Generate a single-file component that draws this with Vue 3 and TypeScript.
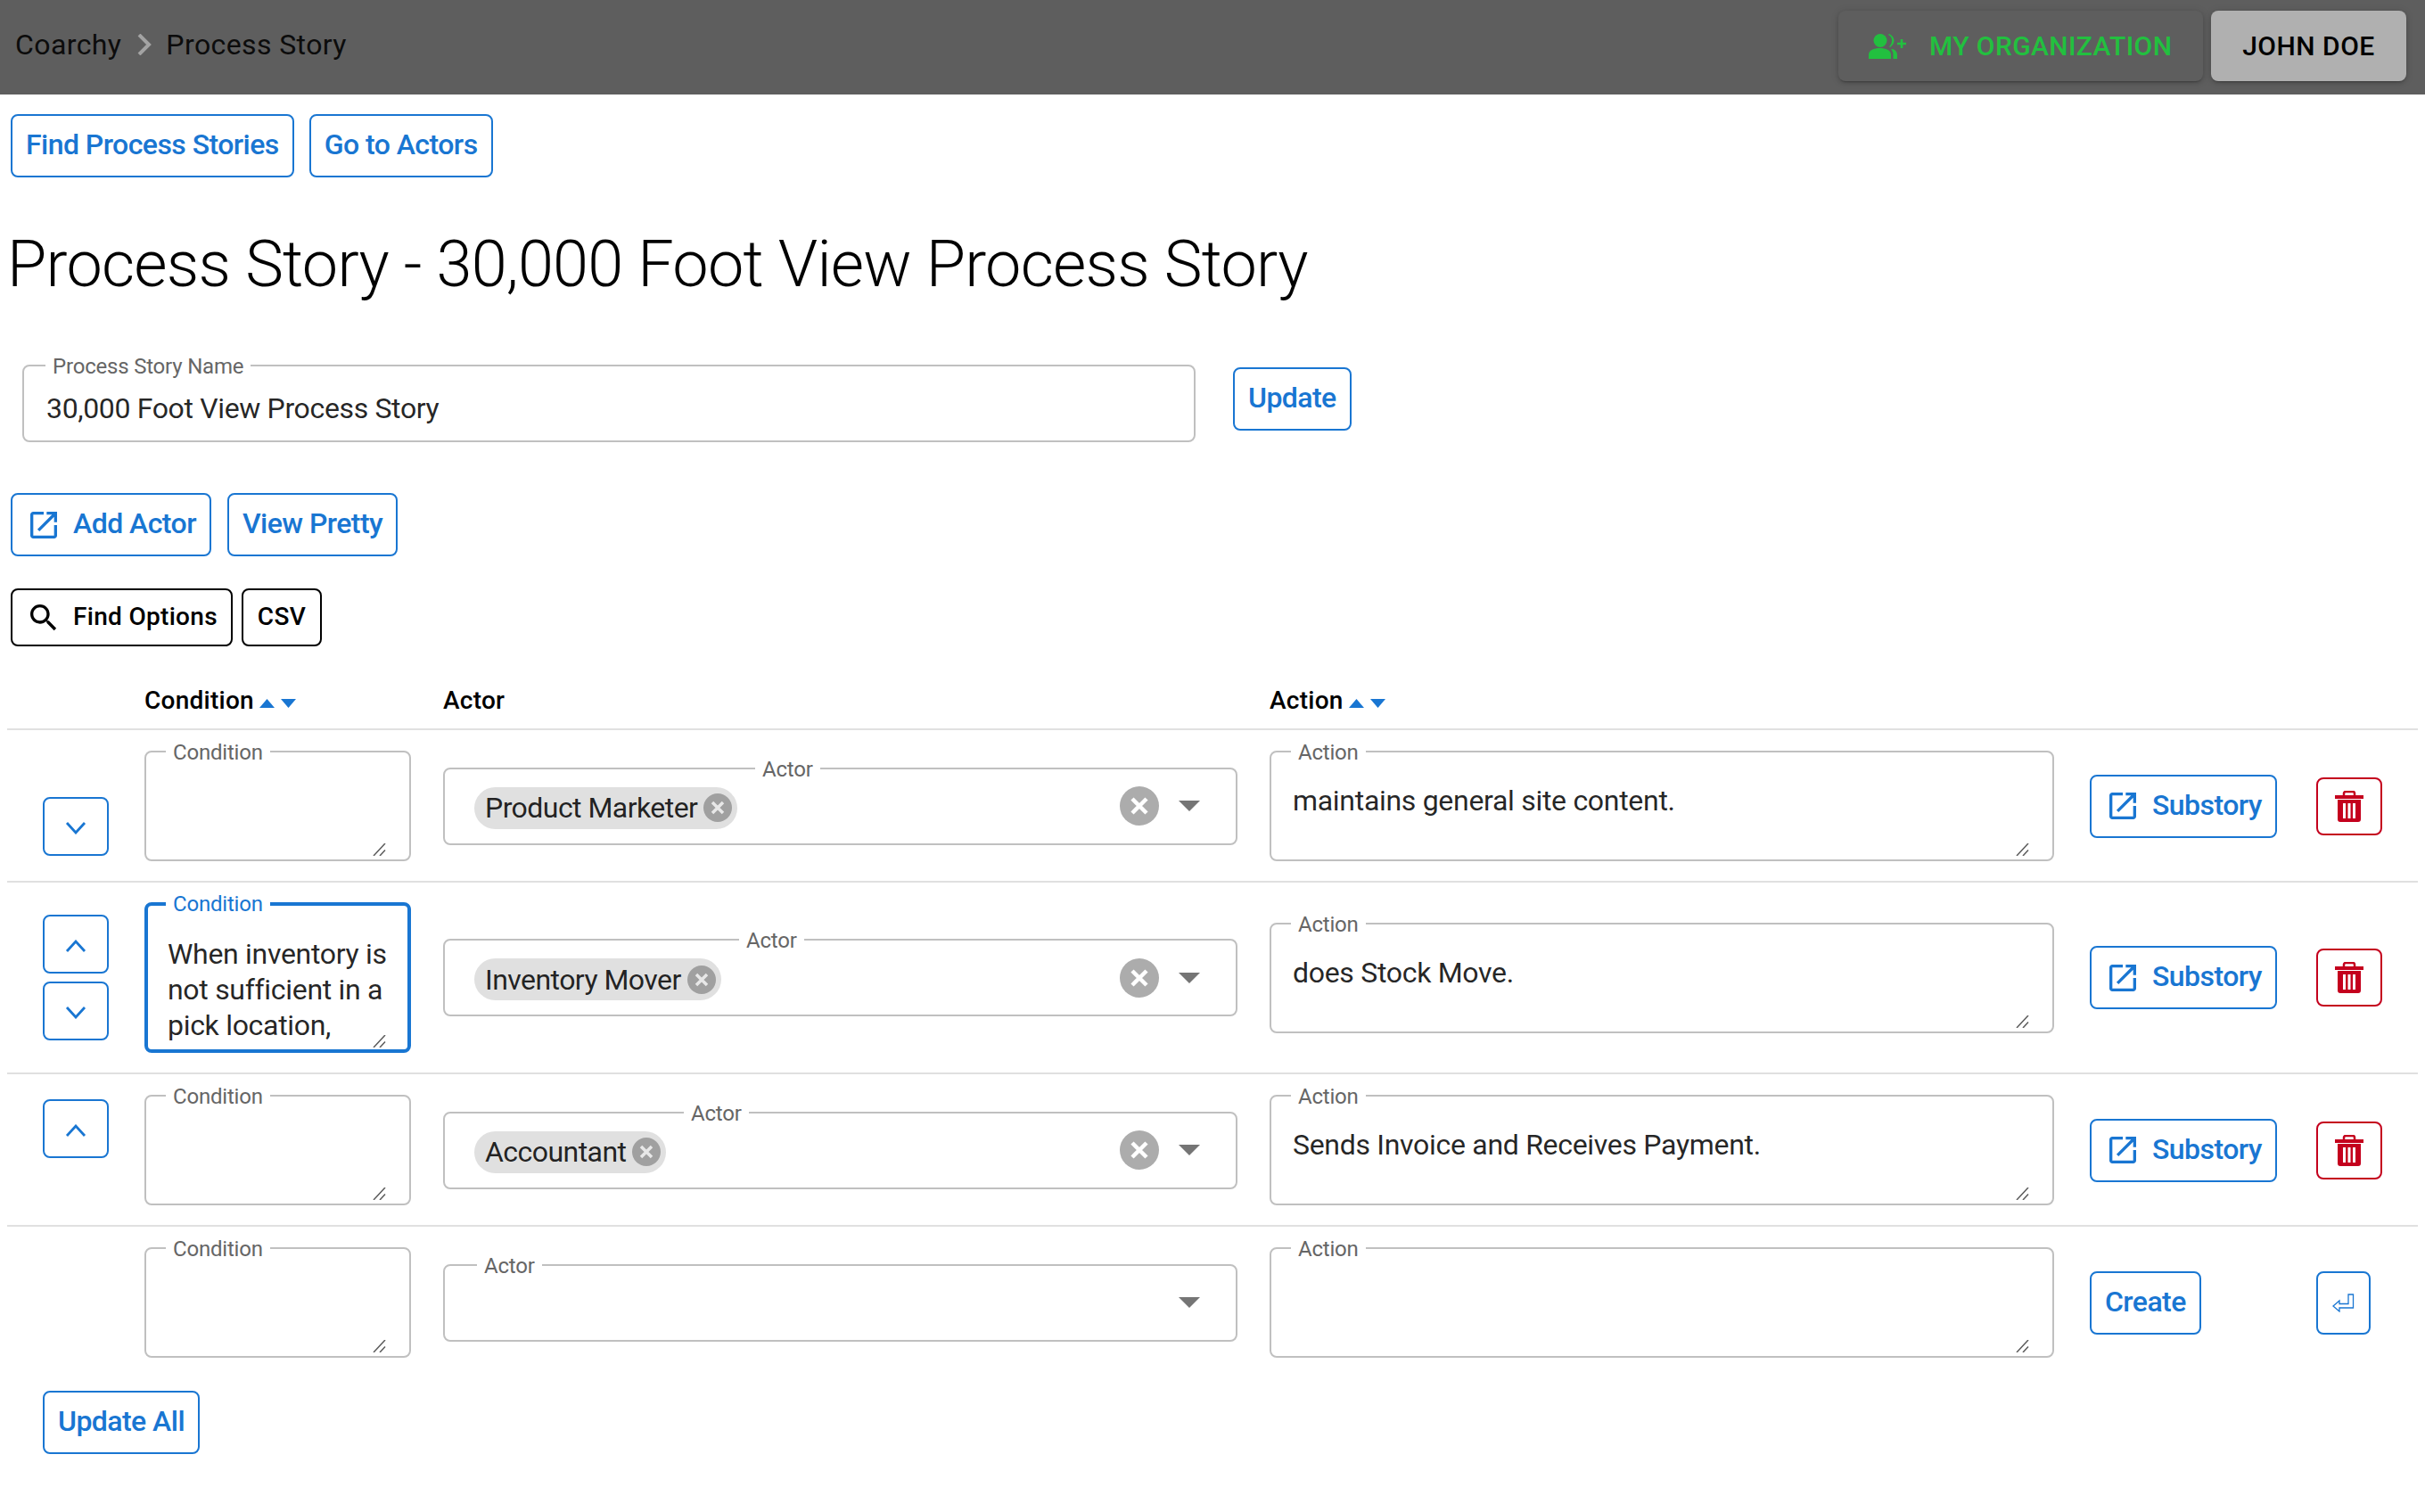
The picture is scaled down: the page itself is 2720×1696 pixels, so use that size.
<template>
  <div class="page">
    <header class="top-bar">
      <nav class="crumbs">
        <span>Coarchy</span>
        <svg class="crumb-sep" width="16" height="24" viewBox="0 0 16 24"><path d="M2 1l11 11L2 23" fill="none" stroke="#a3a3a3" stroke-width="4" /></svg>
        <span>Process Story</span>
      </nav>
      <div class="top-actions">
        <button class="top-btn org-btn">
          <svg class="org-icon" width="42" height="28" viewBox="0 0 42 28" fill="#22c03f">
            <ellipse cx="13" cy="7.5" rx="7.5" ry="7.5" />
            <path d="M0 28v-5c0-4.500 6-7 12.500-7S25 18.500 25 23v5z" />
            <path d="M23 0c4 2 5.500 5 5.500 7.500S27 13 24 15l-1-.8c2-1.700 3-4 3-6.700S25 2.500 22 1z" />
            <path d="M27 17c3 1 5 3.500 5 6.500V28h-4.500v-4.500c0-2.500-.5-4.500-2.500-6z" />
            <path d="M35.700 6h2.600v3.700H42v2.600h-3.700V16h-2.600v-3.700H32V9.700h3.700z" />
          </svg>
          MY ORGANIZATION
        </button>
        <button class="top-btn user-btn">JOHN DOE</button>
      </div>
    </header>

    <div class="btn-row nav-row">
      <button class="btn">Find Process Stories</button>
      <button class="btn">Go to Actors</button>
    </div>

    <h1 class="title">Process Story - 30,000 Foot View Process Story</h1>

    <div class="name-row">
      <div class="field name-field">
        <label class="field-label">Process Story Name</label>
        <input class="name-input" value="30,000 Foot View Process Story" />
      </div>
      <button class="btn update-btn">Update</button>
    </div>

    <div class="btn-row actor-row">
      <button class="btn icon-btn">
        <svg width="40" height="40" viewBox="0 0 24 24" fill="currentColor"><path :d="openIcon" /></svg>
        Add Actor
      </button>
      <button class="btn">View Pretty</button>
    </div>

    <div class="btn-row find-row">
      <button class="btn dark icon-btn">
        <svg width="40" height="40" viewBox="0 0 24 24" fill="currentColor"><path d="M15.5 14h-.79l-.28-.27C15.41 12.59 16 11.11 16 9.5 16 5.910 13.090 3 9.500 3S3 5.910 3 9.500 5.910 16 9.500 16c1.610 0 3.090-.59 4.230-1.570l.27.28v.79l5 4.990L20.490 19l-4.990-5zm-6 0C7.010 14 5 11.990 5 9.500S7.010 5 9.500 5 14 7.010 14 9.500 11.990 14 9.500 14z" /></svg>
        Find Options
      </button>
      <button class="btn dark">CSV</button>
    </div>

    <section class="story-table">
      <div class="grid head">
        <div></div>
        <div class="head-cell">Condition
          <svg class="sort" width="42" height="10" viewBox="0 0 42 10" fill="#1976d2"><path d="M0 10L8.500 0 17 10z" /><path d="M24 0h17l-8.500 10z" /></svg>
        </div>
        <div class="head-cell">Actor</div>
        <div class="head-cell">Action
          <svg class="sort" width="42" height="10" viewBox="0 0 42 10" fill="#1976d2"><path d="M0 10L8.500 0 17 10z" /><path d="M24 0h17l-8.500 10z" /></svg>
        </div>
      </div>

      <div v-for="row in rows" :key="row.id" class="grid row" :class="{ tall: row.focused, last: !row.saved }">
        <div class="move-cell" :class="{ 'push-down': row.saved && !row.up, 'push-up': row.saved && !row.down }">
          <button v-if="row.up" class="btn move-btn">
            <svg width="24" height="14" viewBox="0 0 24 14"><path d="M2 13L12 2l10 11" fill="none" stroke="currentColor" stroke-width="2.800" /></svg>
          </button>
          <button v-if="row.down" class="btn move-btn">
            <svg width="24" height="14" viewBox="0 0 24 14"><path d="M2 1l10 11L22 1" fill="none" stroke="currentColor" stroke-width="2.800" /></svg>
          </button>
        </div>

        <div class="field-cell">
          <div class="field area-field" :class="{ focused: row.focused }">
            <label class="field-label">Condition</label>
            <textarea class="area" :value="row.condition"></textarea>
            <svg class="grip" width="15" height="14" viewBox="0 0 15 14"><path d="M1 14L14 0M8 14l6-6.500" fill="none" stroke="#5c5c5c" stroke-width="1.500" /></svg>
          </div>
        </div>

        <div class="field-cell">
          <div class="field actor-field">
            <label class="field-label" :style="{ left: row.labelLeft + 'px' }">Actor</label>
            <span v-if="row.actor" class="chip">
              <span class="chip-text">{{ row.actor }}</span>
              <svg class="chip-del" width="32" height="32" viewBox="0 0 32 32"><circle cx="16" cy="16" r="16" fill="#a0a0a0" /><path d="M10 10l12 12m0-12L10 22" stroke="#e8e8e8" stroke-width="3.500" /></svg>
            </span>
            <div class="actor-tools">
              <svg v-if="row.actor" class="clear" width="44" height="44" viewBox="0 0 44 44"><circle cx="22" cy="22" r="22" fill="#acacac" /><path d="M14 14l16 16m0-16L14 30" stroke="#fff" stroke-width="4.500" /></svg>
              <svg class="drop" width="24" height="12" viewBox="0 0 24 12" fill="#757575"><path d="M0 0h24L12 12z" /></svg>
            </div>
          </div>
        </div>

        <div class="field-cell action-cell">
          <div class="field area-field">
            <label class="field-label">Action</label>
            <textarea class="area" :value="row.action"></textarea>
            <svg class="grip" width="15" height="14" viewBox="0 0 15 14"><path d="M1 14L14 0M8 14l6-6.500" fill="none" stroke="#5c5c5c" stroke-width="1.500" /></svg>
          </div>
        </div>

        <div class="sub-cell">
          <button v-if="row.saved" class="btn icon-btn sub-btn">
            <svg width="40" height="40" viewBox="0 0 24 24" fill="currentColor"><path :d="openIcon" /></svg>
            Substory
          </button>
          <button v-else class="btn">Create</button>
        </div>

        <div class="end-cell">
          <button v-if="row.saved" class="btn trash-btn">
            <svg width="32" height="35" viewBox="0 0 32 35">
              <path d="M10 5V3a2 2 0 0 1 2-2h8a2 2 0 0 1 2 2v2" fill="none" stroke="currentColor" stroke-width="2.500" />
              <path d="M0 5h32v4H0z" fill="currentColor" />
              <path fill-rule="evenodd" d="M3 10h26v22a3 3 0 0 1-3 3H6a3 3 0 0 1-3-3zM9 14v17h3V14zM14.500 14v17h3V14zM20 14v17h3V14z" fill="currentColor" />
            </svg>
          </button>
          <button v-else class="btn enter-btn">
            <svg width="25" height="21" viewBox="0 0 25 21"><path d="M1 14l7-6v3.500h10V1h5.500v15H8v4z" fill="none" stroke="currentColor" stroke-width="1.300" /></svg>
          </button>
        </div>
      </div>
    </section>

    <button class="btn update-all">Update All</button>
  </div>
</template>

<script setup lang="ts">
interface StoryRow {
  id: number
  up: boolean
  down: boolean
  condition: string
  actor: string
  labelLeft: number
  action: string
  saved: boolean
  focused: boolean
}

const openIcon = 'M19 19H5V5h7V3H5c-1.110 0-2 .9-2 2v14c0 1.100.89 2 2 2h14c1.100 0 2-.9 2-2v-7h-2v7zM14 3v2h3.590l-9.830 9.830 1.410 1.410L19 6.410V10h2V3h-7z'

const rows: StoryRow[] = [
  { id: 1, up: false, down: true, condition: '', actor: 'Product Marketer', labelLeft: 348, action: 'maintains general site content.', saved: true, focused: false },
  { id: 2, up: true, down: true, condition: 'When inventory is not sufficient in a pick location,', actor: 'Inventory Mover', labelLeft: 330, action: 'does Stock Move.', saved: true, focused: true },
  { id: 3, up: true, down: false, condition: '', actor: 'Accountant', labelLeft: 268, action: 'Sends Invoice and Receives Payment.', saved: true, focused: false },
  { id: 4, up: false, down: false, condition: '', actor: '', labelLeft: 36, action: '', saved: false, focused: false }
]
</script>

<style scoped>
.page {
  font-family: Roboto, "Liberation Sans", sans-serif;
  color: rgba(0, 0, 0, 0.87);
  width: 2720px;
  min-height: 1696px;
  background: #fff;
}

.top-bar {
  height: 106px;
  background: #5e5e5e;
  display: flex;
  justify-content: space-between;
  align-items: flex-start;
  padding: 12px 21px 0 17px;
  box-sizing: border-box;
}

.crumbs {
  display: flex;
  align-items: center;
  height: 76px;
  font-size: 32px;
  letter-spacing: 0.4px;
  color: #0c0c0c;
}

.crumb-sep {
  margin: 0 16px 0 18px;
}

.top-actions {
  display: flex;
  gap: 9px;
}

.top-btn {
  height: 79px;
  border: none;
  border-radius: 8px;
  font-family: inherit;
  font-size: 30px;
  font-weight: 500;
  letter-spacing: 0.4px;
  box-shadow: 0 3px 2px -2px rgba(0, 0, 0, 0.2), 0 2px 4px 0 rgba(0, 0, 0, 0.14), 0 1px 10px 0 rgba(0, 0, 0, 0.12);
}

.org-btn {
  width: 409px;
  background: #5e5e5e;
  color: #22c03f;
  display: flex;
  align-items: center;
  padding: 0 0 0 34px;
}

.org-icon {
  margin-right: 26px;
}

.user-btn {
  width: 219px;
  background: #b0b0b0;
  color: #000;
  letter-spacing: 0.5px;
}

.btn-row {
  display: flex;
  padding-left: 12px;
}

.nav-row {
  margin-top: 22px;
  gap: 17px;
}

.btn {
  box-sizing: border-box;
  height: 71px;
  padding: 0 15px 3px;
  background: #fff;
  border: 2px solid #1976d2;
  border-radius: 8px;
  color: #1976d2;
  font-family: inherit;
  font-size: 32px;
  font-weight: 500;
  letter-spacing: -0.55px;
  white-space: nowrap;
  display: inline-flex;
  align-items: center;
  justify-content: center;
}

.btn.dark {
  height: 65px;
  font-size: 28px;
  letter-spacing: 0.3px;
  color: #000;
  border-color: #000;
}

.icon-btn svg {
  margin-right: 13px;
  margin-top: 3px;
}

.title {
  margin: 56px 0 70px 8px;
  font-size: 72px;
  line-height: 84px;
  font-weight: 300;
  letter-spacing: -0.75px;
  color: #000;
}

.name-row {
  display: flex;
  align-items: flex-start;
  padding-left: 25px;
  gap: 42px;
}

.field {
  position: relative;
  box-sizing: border-box;
  border: 2px solid #c0c0c0;
  border-radius: 8px;
  background: #fff;
}

.field-label {
  position: absolute;
  top: -14px;
  left: 22px;
  padding: 0 8px;
  background: #fff;
  font-size: 24px;
  line-height: 28px;
  letter-spacing: -0.2px;
  color: #666;
}

.name-field {
  width: 1316px;
  height: 87px;
  display: flex;
  align-items: center;
  padding: 10px 25px 0;
}

.name-field .field-label {
  left: 24px;
}

.name-input {
  width: 100%;
  border: none;
  outline: none;
  padding: 0;
  font-family: inherit;
  font-size: 32px;
  letter-spacing: -0.35px;
  color: rgba(0, 0, 0, 0.87);
  background: transparent;
}

.update-btn {
  margin-top: 3px;
}

.actor-row {
  margin-top: 57px;
  gap: 18px;
}

.find-row {
  margin-top: 36px;
  gap: 10px;
}

.find-row .btn:last-child {
  padding: 0 16px 3px;
}

.story-table {
  margin: 0 8px;
}

.grid {
  display: grid;
  grid-template-columns: 154px 335px 927px 920px 254px 1fr;
  border-bottom: 2px solid #e0e0e0;
  align-items: center;
}

.head {
  height: 94px;
  box-sizing: border-box;
  padding-top: 28px;
}

.head-cell {
  font-size: 28px;
  font-weight: 500;
  letter-spacing: 0.25px;
  color: #000;
}

.sort {
  margin-left: -1px;
  vertical-align: 1px;
}

.row {
  padding: 23px 0 22px;
}

.row.tall {
  padding: 22px 0;
}

.row.last {
  border-bottom: none;
}

.move-cell {
  display: flex;
  flex-direction: column;
  gap: 9px;
  padding-left: 40px;
}

.move-cell.push-down {
  padding-top: 45px;
}

.move-cell.push-up {
  padding-bottom: 48px;
}

.move-btn {
  width: 74px;
  height: 66px;
  padding: 4px 0 0;
}

.field-cell {
  padding-right: 36px;
}

.action-cell {
  padding-right: 40px;
}

.area-field {
  padding: 34px 24px 2px;
  display: flex;
}

.area-field.focused {
  border: 4px solid #1976d2;
  padding: 34px 22px 1px;
}

.area-field.focused .field-label {
  color: #1976d2;
  left: 20px;
  top: -16px;
}

.area {
  display: block;
  width: 100%;
  height: 84px;
  border: none;
  outline: none;
  padding: 0;
  resize: none;
  overflow: hidden;
  font-family: inherit;
  font-size: 32px;
  line-height: 40px;
  letter-spacing: -0.3px;
  color: rgba(0, 0, 0, 0.87);
  background: transparent;
}

.focused .area {
  height: 126px;
}

.grip {
  position: absolute;
  right: 26px;
  bottom: 4px;
  pointer-events: none;
}

.focused .grip {
  right: 24px;
  bottom: 2px;
}

.actor-field {
  height: 87px;
  display: flex;
  align-items: center;
  padding: 4px 40px 0 33px;
}

.chip {
  display: inline-flex;
  align-items: center;
  height: 47px;
  border-radius: 24px;
  background: #e0e0e0;
  padding: 0 6px 0 12px;
  font-size: 32px;
  letter-spacing: -0.55px;
}

.chip-del {
  margin-left: 7px;
}

.actor-tools {
  margin-left: auto;
  display: flex;
  align-items: center;
  gap: 22px;
  margin-top: -4px;
}

.sub-cell,
.end-cell {
  display: flex;
  align-items: center;
}

.trash-btn {
  width: 74px;
  height: 65px;
  padding: 0;
  color: #c4001d;
  border-color: #c4001d;
}

.enter-btn {
  width: 61px;
  padding: 0;
}

.update-all {
  margin: 15px 0 0 48px;
}
</style>
